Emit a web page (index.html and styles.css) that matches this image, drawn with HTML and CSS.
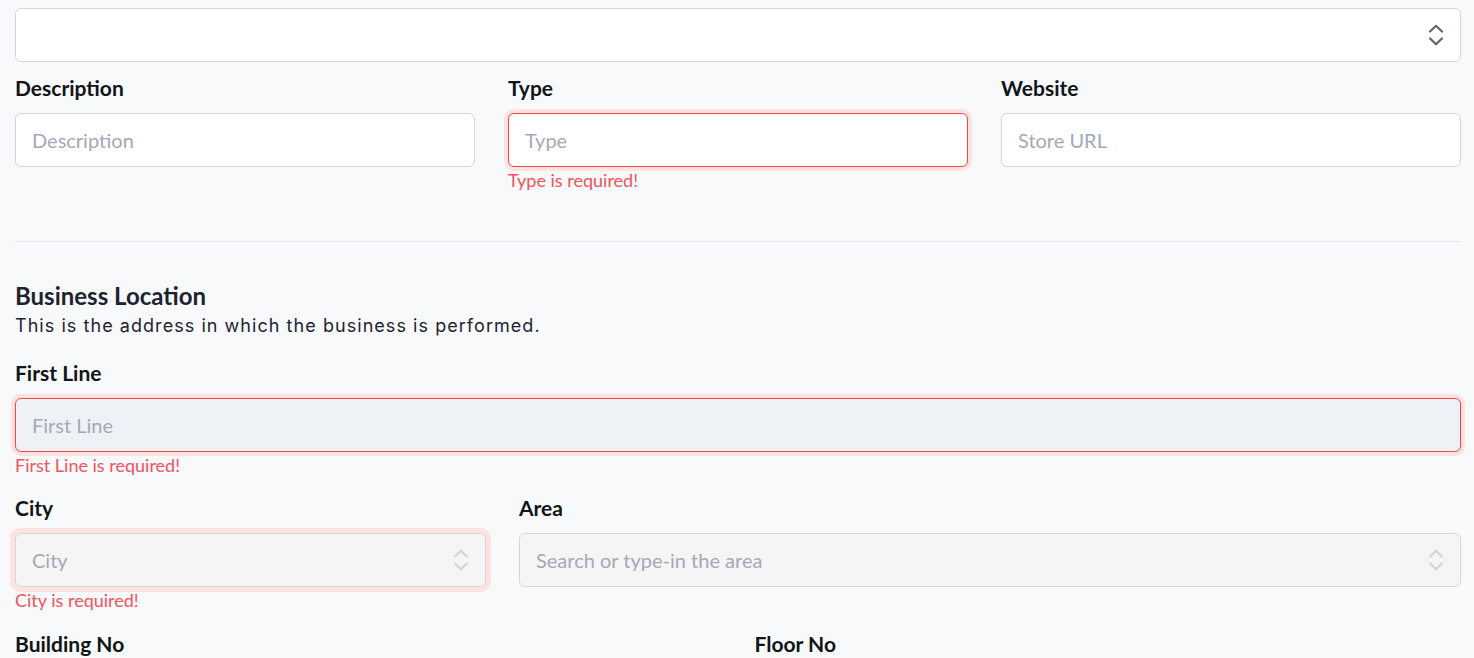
FILE: index.html
```html
<!DOCTYPE html>
<html>
<head>
<meta charset="utf-8">
<link rel="stylesheet" href="styles.css">
</head>
<body>
<div class="page">
  <div class="select top-select">
    <span class="value"></span>
    <svg class="chev" width="16" height="22" viewBox="0 0 16 22"><path d="M2 7.5 L8 1.8 L14 7.5 M2 14.5 L8 20.2 L14 14.5" fill="none" stroke="currentColor" stroke-width="2.2" stroke-linecap="round" stroke-linejoin="round"/></svg>
  </div>

  <div class="row three">
    <div class="field">
      <label class="label">Description</label>
      <div class="input"><span class="ph">Description</span></div>
    </div>
    <div class="field">
      <label class="label">Type</label>
      <div class="input error"><span class="ph">Type</span></div>
      <div class="err">Type is required!</div>
    </div>
    <div class="field">
      <label class="label">Website</label>
      <div class="input"><span class="ph">Store URL</span></div>
    </div>
  </div>

  <hr class="divider">

  <h2 class="section-title">Business Location</h2>
  <p class="section-sub">This is the address in which the business is performed.</p>

  <div class="field full">
    <label class="label">First Line</label>
    <div class="input error filled"><span class="ph">First Line</span></div>
    <div class="err">First Line is required!</div>
  </div>

  <div class="row city-area">
    <div class="field">
      <label class="label">City</label>
      <div class="input select disabled ring"><span class="ph">City</span>
        <svg class="chev light" width="16" height="22" viewBox="0 0 16 22"><path d="M2 7.5 L8 1.8 L14 7.5 M2 14.5 L8 20.2 L14 14.5" fill="none" stroke="currentColor" stroke-width="2.2" stroke-linecap="round" stroke-linejoin="round"/></svg>
      </div>
      <div class="err">City is required!</div>
    </div>
    <div class="field">
      <label class="label">Area</label>
      <div class="input select disabled"><span class="ph">Search or type-in the area</span>
        <svg class="chev light" width="16" height="22" viewBox="0 0 16 22"><path d="M2 7.5 L8 1.8 L14 7.5 M2 14.5 L8 20.2 L14 14.5" fill="none" stroke="currentColor" stroke-width="2.2" stroke-linecap="round" stroke-linejoin="round"/></svg>
      </div>
    </div>
  </div>

  <div class="row two">
    <div class="field"><label class="label">Building No</label></div>
    <div class="field"><label class="label">Floor No</label></div>
  </div>
</div>
</body>
</html>
```

FILE: styles.css
```css
* { box-sizing: border-box; }
html, body { margin: 0; padding: 0; }
body {
  background: #f8f9fb;
  font-family: Lato, "Liberation Sans", sans-serif;
  color: #111418;
  overflow: hidden;
}
.page {
  padding: 8px 13px 0 15px;
  width: 1474px;
}
.select, .input {
  height: 54px;
  border: 1px solid #d3d6dd;
  border-radius: 6px;
  background: #fff;
  display: flex;
  align-items: center;
  padding: 0 16px;
  position: relative;
}
.select { justify-content: space-between; }
.chev { color: #5d6579; display: block; }
.chev.light { color: #cfd4dd; }
.ph {
  font-size: 20px;
  color: #a3a9b7;
}
.row { display: grid; column-gap: 33px; }
.row.three { grid-template-columns: repeat(3, 1fr); margin-top: 12px; }
.row.city-area { grid-template-columns: 1fr 2fr; margin-top: 17px; }
.row.two { grid-template-columns: repeat(2, 1fr); margin-top: 18px; }
.field { display: flex; flex-direction: column; }
.label {
  font-weight: 700;
  font-size: 21px;
  line-height: 28px;
  height: 28px;
  margin-bottom: 11px;
  color: #111418;
}
.input.error {
  border-color: #ef4b43;
  box-shadow: 0 0 0 4px #fee2e1;
}
.input.ring { box-shadow: 0 0 0 5px #fee2e1; }
.input.filled { background: #eef2f6; }
.input.disabled { background: #f5f5f5; }
.err {
  font-size: 18px;
  line-height: 24px;
  color: #f2545b;
  margin-top: 1px;
}
.divider {
  border: 0;
  border-top: 1px solid #e6e8ec;
  margin: 49px 0 0;
  height: 0;
}
.section-title {
  font-size: 24px;
  line-height: 32px;
  font-weight: 700;
  margin: 38px 0 0;
  color: #1e2330;
}
.section-sub {
  font-family: Inter, "Open Sans", sans-serif;
  font-size: 18px;
  letter-spacing: 1.05px;
  line-height: 28px;
  margin: 0;
  color: #1e2330;
}
.field.full { margin-top: 19px; }
```
